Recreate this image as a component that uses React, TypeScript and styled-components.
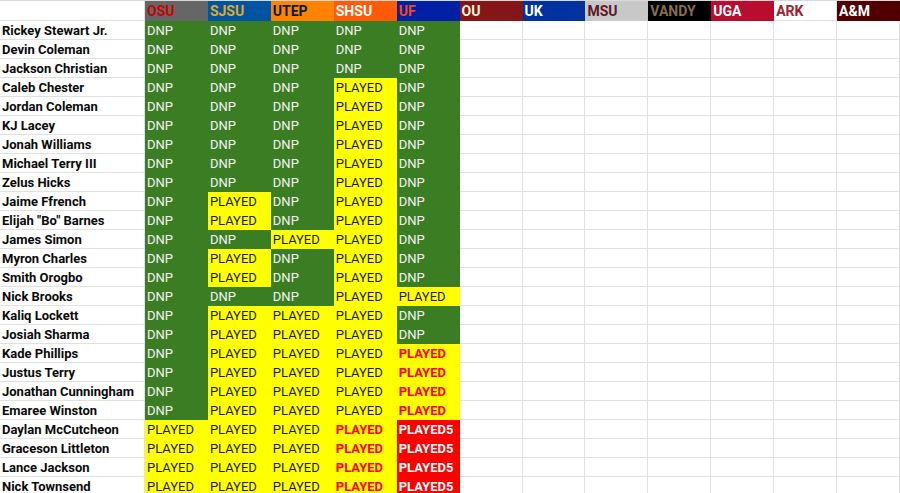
import styled, { createGlobalStyle } from 'styled-components'

const GlobalStyle = createGlobalStyle`
  html, body {
    margin: 0;
    padding: 0;
    background: #ffffff;
  }
`

type Status = 'dnp' | 'played' | 'playedRed' | 'played5' | 'empty'

const teams = [
  { name: 'OSU', bg: '#666666', fg: '#cc0000' },
  { name: 'SJSU', bg: '#0055a2', fg: '#e5a823' },
  { name: 'UTEP', bg: '#ff8200', fg: '#041e42' },
  { name: 'SHSU', bg: '#fe5a08', fg: '#ffffff' },
  { name: 'UF', bg: '#0021a5', fg: '#fa4616' },
  { name: 'OU', bg: '#841617', fg: '#fdf9d8' },
  { name: 'UK', bg: '#0033a0', fg: '#ffffff' },
  { name: 'MSU', bg: '#c8c8c8', fg: '#5d1725' },
  { name: 'VANDY', bg: '#000000', fg: '#866d4b' },
  { name: 'UGA', bg: '#ba0c2f', fg: '#ffffff' },
  { name: 'ARK', bg: '#ffffff', fg: '#9d2235' },
  { name: 'A&M', bg: '#500000', fg: '#ffffff' },
]

const D: Status = 'dnp'
const P: Status = 'played'
const R: Status = 'playedRed'
const F: Status = 'played5'

const players: { name: string; games: Status[] }[] = [
  { name: 'Rickey Stewart Jr.', games: [D, D, D, D, D] },
  { name: 'Devin Coleman', games: [D, D, D, D, D] },
  { name: 'Jackson Christian', games: [D, D, D, D, D] },
  { name: 'Caleb Chester', games: [D, D, D, P, D] },
  { name: 'Jordan Coleman', games: [D, D, D, P, D] },
  { name: 'KJ Lacey', games: [D, D, D, P, D] },
  { name: 'Jonah Williams', games: [D, D, D, P, D] },
  { name: 'Michael Terry III', games: [D, D, D, P, D] },
  { name: 'Zelus Hicks', games: [D, D, D, P, D] },
  { name: 'Jaime Ffrench', games: [D, P, D, P, D] },
  { name: 'Elijah "Bo" Barnes', games: [D, P, D, P, D] },
  { name: 'James Simon', games: [D, D, P, P, D] },
  { name: 'Myron Charles', games: [D, P, D, P, D] },
  { name: 'Smith Orogbo', games: [D, P, D, P, D] },
  { name: 'Nick Brooks', games: [D, D, D, P, P] },
  { name: 'Kaliq Lockett', games: [D, P, P, P, D] },
  { name: 'Josiah Sharma', games: [D, P, P, P, D] },
  { name: 'Kade Phillips', games: [D, P, P, P, R] },
  { name: 'Justus Terry', games: [D, P, P, P, R] },
  { name: 'Jonathan Cunningham', games: [D, P, P, P, R] },
  { name: 'Emaree Winston', games: [D, P, P, P, R] },
  { name: 'Daylan McCutcheon', games: [P, P, P, R, F] },
  { name: 'Graceson Littleton', games: [P, P, P, R, F] },
  { name: 'Lance Jackson', games: [P, P, P, R, F] },
  { name: 'Nick Townsend', games: [P, P, P, R, F] },
]

const labels: Record<Status, string> = {
  dnp: 'DNP',
  played: 'PLAYED',
  playedRed: 'PLAYED',
  played5: 'PLAYED5',
  empty: '',
}

const palette: Record<Status, { bg: string; fg: string; weight: number }> = {
  dnp: { bg: '#3b7d23', fg: '#f4f4f4', weight: 400 },
  played: { bg: '#ffff00', fg: '#1a1a1a', weight: 400 },
  playedRed: { bg: '#ffff00', fg: '#ff0000', weight: 700 },
  played5: { bg: '#ff0000', fg: '#ffffff', weight: 700 },
  empty: { bg: '#ffffff', fg: '#000000', weight: 400 },
}

const Sheet = styled.div`
  display: grid;
  grid-template-columns: 145px repeat(12, 1fr);
  grid-template-rows: 20px;
  grid-auto-rows: 19px;
  width: 900px;
  border-top: 1px solid #d9d9d9;
  font-family: Roboto, 'Liberation Sans', sans-serif;
  font-size: 13px;
  overflow: hidden;
`

const BaseCell = styled.div`
  display: flex;
  align-items: center;
  padding-left: 2px;
  box-sizing: border-box;
  white-space: nowrap;
  overflow: hidden;
  border-right: 1px solid #e1e1e1;
  border-bottom: 1px solid #e1e1e1;
`

const Corner = styled(BaseCell)`
  background: #ffffff;
`

const HeaderCell = styled(BaseCell)<{ $bg: string; $fg: string }>`
  background: ${(p) => p.$bg};
  color: ${(p) => p.$fg};
  border-color: ${(p) => (p.$bg === '#ffffff' ? '#e1e1e1' : p.$bg)};
  font-weight: 700;
  font-size: 14px;
`

const NameCell = styled(BaseCell)`
  color: #0a0a0a;
  font-weight: 700;
`

const DataCell = styled(BaseCell)<{ $status: Status }>`
  background: ${(p) => palette[p.$status].bg};
  color: ${(p) => palette[p.$status].fg};
  font-weight: ${(p) => palette[p.$status].weight};
  border-color: ${(p) => (p.$status === 'empty' ? '#e1e1e1' : palette[p.$status].bg)};
`

function Row({ name, games }: { name: string; games: Status[] }) {
  const cells: Status[] = [...games]
  while (cells.length < teams.length) cells.push('empty')
  return (
    <>
      <NameCell>{name}</NameCell>
      {cells.map((s, i) => (
        <DataCell key={i} $status={s}>
          {labels[s]}
        </DataCell>
      ))}
    </>
  )
}

function App() {
  return (
    <>
      <GlobalStyle />
      <Sheet>
        <Corner />
        {teams.map((t) => (
          <HeaderCell key={t.name} $bg={t.bg} $fg={t.fg}>
            {t.name}
          </HeaderCell>
        ))}
        {players.map((pl) => (
          <Row key={pl.name} name={pl.name} games={pl.games} />
        ))}
      </Sheet>
    </>
  )
}

export default App
